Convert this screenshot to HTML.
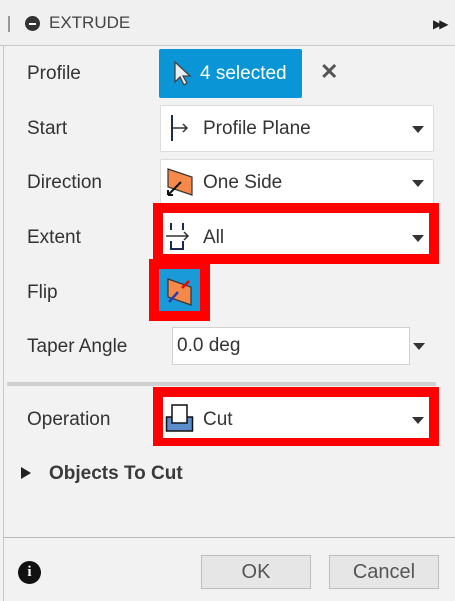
<!DOCTYPE html>
<html><head><style>
body{margin:0;width:455px;height:601px;background:#f2f2f2;font-family:"Liberation Sans",sans-serif;position:relative;overflow:hidden;color:#3c3c3c}
.a{position:absolute}
.lbl{position:absolute;left:27px;font-size:19px;line-height:20px;color:#333}
.dd{position:absolute;background:#fff;border:1px solid #dcdcdc;border-radius:2px}
.red{position:absolute;background:#f00}
.tri{position:absolute;width:0;height:0;border-left:6px solid transparent;border-right:6px solid transparent;border-top:7px solid #333}
.txt{position:absolute;font-size:19px;color:#333;line-height:20px}
</style></head><body>
<div class="a" style="left:3px;top:0;width:1px;height:601px;background:#c8c8c8"></div>
<div class="a" style="left:0;top:0;width:455px;height:45px;background:#f0f0f0;border-bottom:1px solid #c8c8c8"></div>
<div class="a" style="left:8px;top:16px;width:2px;height:16px;background:#999"></div>
<div class="a" style="left:25px;top:16px;width:15px;height:15px;border-radius:50%;background:#333"></div>
<div class="a" style="left:29px;top:22.5px;width:7px;height:2px;background:#fff"></div>
<div class="txt" style="left:49px;top:13px;font-size:17px;color:#444">EXTRUDE</div>
<div class="txt" style="left:433px;top:14px;font-size:12px;color:#222;letter-spacing:-3px">▶▶</div>

<div class="lbl" style="top:64px">Profile</div>
<div class="a" style="left:159px;top:49px;width:143px;height:49px;background:#0a96d6;border-radius:2px"></div>
<svg class="a" style="left:172px;top:60px" width="20" height="28"><path d="M3 2 L3 22 L8 17 L12 25 L15 23 L11 16 L18 16 Z" fill="#e8eef4" stroke="#444" stroke-width="1.3"/></svg>
<div class="txt" style="left:200px;top:64px;color:#fff">4 selected</div>
<div class="txt" style="left:320px;top:62px;font-size:22px;color:#555;font-weight:bold">✕</div>

<div class="lbl" style="top:119px">Start</div>
<div class="dd" style="left:160px;top:105px;width:272px;height:45px"></div>
<svg class="a" style="left:170px;top:115px" width="22" height="28"><path d="M2 0V26" stroke="#1a2a50" stroke-width="2"/><path d="M3 13H17M13 9L17 13L13 17" stroke="#333" stroke-width="1.5" fill="none"/></svg>
<div class="txt" style="left:203px;top:119px">Profile Plane</div>
<div class="tri" style="left:412px;top:126px"></div>

<div class="lbl" style="top:173px">Direction</div>
<div class="dd" style="left:160px;top:159px;width:272px;height:46px"></div>
<svg class="a" style="left:165px;top:168px" width="30" height="32"><path d="M3 1L27 9L27 27L3 19Z" fill="#f5894a" stroke="#333" stroke-width="1.2"/><path d="M16 14L3 27M3 27L3 22M3 27L8 27" stroke="#111" stroke-width="2" fill="none"/></svg>
<div class="txt" style="left:203px;top:173px">One Side</div>
<div class="tri" style="left:412px;top:180px"></div>

<div class="lbl" style="top:228px">Extent</div>
<div class="red" style="left:153px;top:203px;width:286px;height:61px"></div>
<div class="a" style="left:163px;top:213px;width:266px;height:41px;background:#fff"></div>
<svg class="a" style="left:165px;top:222px" width="30" height="30"><path d="M6 1V8M18 1V8M6 19V27H18V19" stroke="#1a2a50" stroke-width="2" fill="none"/><path d="M1 14H23M19 10L23 14L19 18" stroke="#333" stroke-width="1.5" fill="none"/></svg>
<div class="txt" style="left:203px;top:228px">All</div>
<div class="tri" style="left:412px;top:235px"></div>

<div class="lbl" style="top:283px">Flip</div>
<div class="red" style="left:149px;top:259px;width:61px;height:62px"></div>
<div class="a" style="left:159px;top:269px;width:41px;height:42px;background:#1a9ad6"></div>
<svg class="a" style="left:165px;top:275px" width="30" height="32"><path d="M3 4L26 12L26 30L3 22Z" fill="#f5894a" stroke="#333" stroke-width="1.2"/><path d="M13 17L4 27" stroke="#2a3ab0" stroke-width="2.5"/><path d="M17 13L24 6" stroke="#e00" stroke-width="2.5"/></svg>

<div class="lbl" style="top:337px">Taper Angle</div>
<div class="a" style="left:172px;top:327px;width:236px;height:36px;background:#fff;border:1px solid #d0d0d0"></div>
<div class="txt" style="left:177px;top:336px">0.0 deg</div>
<div class="tri" style="left:413px;top:343px"></div>

<div class="a" style="left:7px;top:382px;width:429px;height:4px;background:#d0d0d0"></div>

<div class="lbl" style="top:410px">Operation</div>
<div class="red" style="left:153px;top:387px;width:286px;height:59px"></div>
<div class="a" style="left:163px;top:397px;width:266px;height:41px;background:#fff"></div>
<svg class="a" style="left:165px;top:404px" width="30" height="30"><rect x="1.5" y="13" width="26" height="14" fill="#5b8ccc" stroke="#111" stroke-width="1.5"/><rect x="7" y="1" width="15" height="18" fill="#fff" stroke="#111" stroke-width="1.5"/></svg>
<div class="txt" style="left:203px;top:410px">Cut</div>
<div class="tri" style="left:412px;top:417px"></div>

<div class="a" style="left:21px;top:467px;width:0;height:0;border-top:6px solid transparent;border-bottom:6px solid transparent;border-left:10px solid #222"></div>
<div class="txt" style="left:49px;top:464px;font-weight:bold;color:#3a3a3a">Objects To Cut</div>

<div class="a" style="left:3px;top:537px;width:452px;height:1px;background:#b8b8b8"></div>
<div class="a" style="left:18px;top:561px;width:23px;height:23px;border-radius:50%;background:#111;color:#fff;font:bold 15px 'Liberation Serif',serif;text-align:center;line-height:23px">i</div>
<div class="a" style="left:201px;top:555px;width:108px;height:32px;background:#e6e6e6;border:1px solid #bdbdbd;font-size:20px;color:#555;text-align:center;line-height:32px">OK</div>
<div class="a" style="left:329px;top:555px;width:108px;height:32px;background:#e6e6e6;border:1px solid #bdbdbd;font-size:20px;color:#555;text-align:center;line-height:32px">Cancel</div>
</body></html>
